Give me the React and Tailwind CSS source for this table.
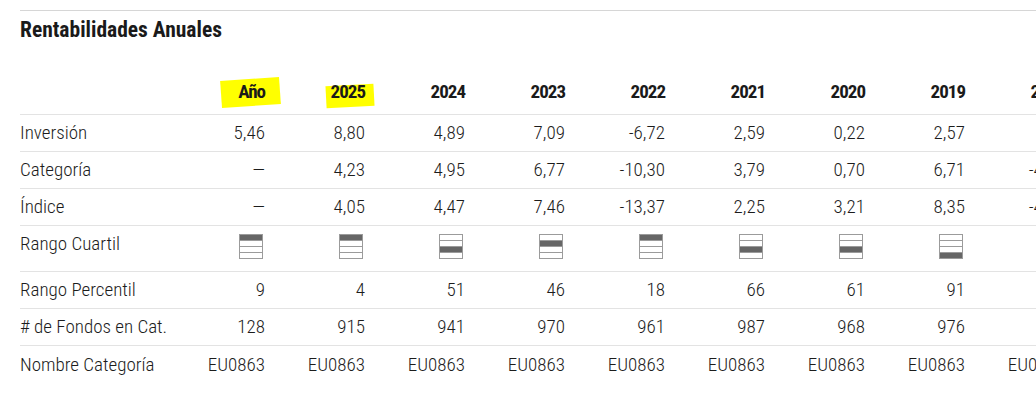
const years = ['Año', '2025', '2024', '2023', '2022', '2021', '2020', '2019', '2018'];

const rows = [
  { label: 'Inversión', values: ['5,46', '8,80', '4,89', '7,09', '-6,72', '2,59', '0,22', '2,57', '—'] },
  { label: 'Categoría', values: ['—', '4,23', '4,95', '6,77', '-10,30', '3,79', '0,70', '6,71', '-4,11'] },
  { label: 'Índice', values: ['—', '4,05', '4,47', '7,46', '-13,37', '2,25', '3,21', '8,35', '-4,14'] },
];

const quartiles = [1, 1, 3, 2, 1, 3, 3, 4, 0];

const rows2 = [
  { label: 'Rango Percentil', values: ['9', '4', '51', '46', '18', '66', '61', '91', '—'] },
  { label: '# de Fondos en Cat.', values: ['128', '915', '941', '970', '961', '987', '968', '976', '—'] },
];

function QuartileIcon({ q }) {
  if (!q) return null;
  return (
    <div className="flex h-[25px] w-[24px] flex-col gap-px bg-[#9b9b9b] p-px">
      {[1, 2, 3, 4].map((i) => (
        <div key={i} className={i === q ? 'flex-1 bg-[#666666]' : 'flex-1 bg-white'} />
      ))}
    </div>
  );
}

function Row({ label, values, last }) {
  return (
    <div
      className={
        last
          ? 'grid h-[37px] grid-cols-[145px_repeat(9,100px)] items-center'
          : 'grid h-[37px] grid-cols-[145px_repeat(9,100px)] items-center border-b border-[#e3e3e3]'
      }
    >
      <div className="whitespace-nowrap">{label}</div>
      {values.map((v, i) => (
        <div key={i} className="whitespace-nowrap text-right">
          {v}
        </div>
      ))}
    </div>
  );
}

export default function App() {
  return (
    <div className="h-[404px] w-[1036px] overflow-hidden bg-white pl-[20px] pt-[10px] font-['Roboto',sans-serif] text-[19px] font-light leading-[24px] text-[#1c1c1c] font-stretch-condensed">
      <div className="w-[1100px] border-t border-[#d6d6d6]">
        <h2 className="mt-[5px] text-[21.5px] font-bold leading-[28px] text-[#1a1a1a]">Rentabilidades Anuales</h2>

        <div className="grid h-[71px] grid-cols-[145px_repeat(9,100px)] border-b border-[#e3e3e3] text-[19px] font-bold tracking-[-1px] text-[#1a1a1a]">
          <div />
          {years.map((y, i) => (
            <div key={y} className="relative flex items-end justify-end pb-[10px]">
              {i === 0 && (
                <span className="absolute left-[56px] top-[35px] h-[27px] w-[59px] -rotate-[4deg] bg-[#ffff00]" />
              )}
              {i === 1 && (
                <span className="absolute left-[61px] top-[41px] h-[22px] w-[48px] -rotate-[3deg] bg-[#ffff00]" />
              )}
              <span className="relative">{y}</span>
            </div>
          ))}
        </div>

        {rows.map((r) => (
          <Row key={r.label} label={r.label} values={r.values} />
        ))}

        <div className="grid h-[46px] grid-cols-[145px_repeat(9,100px)] border-b border-[#e3e3e3]">
          <div className="pt-[6px]">Rango Cuartil</div>
          {quartiles.map((q, i) => (
            <div key={i} className="flex justify-end pr-[2px] pt-[8px]">
              <QuartileIcon q={q} />
            </div>
          ))}
        </div>

        {rows2.map((r) => (
          <Row key={r.label} label={r.label} values={r.values} />
        ))}

        <Row label="Nombre Categoría" values={Array(9).fill('EU0863')} last />
      </div>
    </div>
  );
}
